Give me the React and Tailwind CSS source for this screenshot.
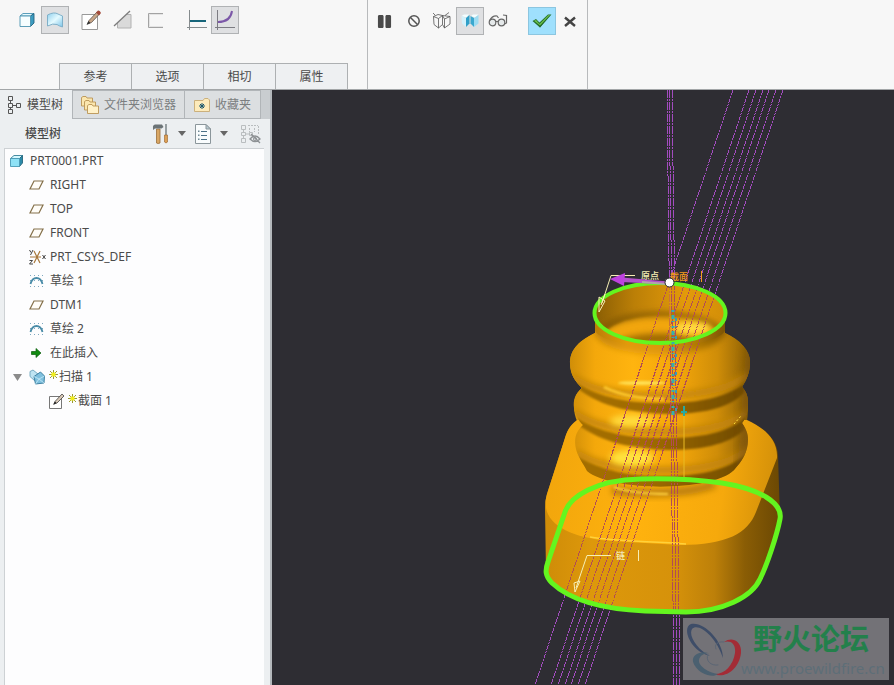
import React, { useState } from 'react';
import { FaPause } from 'react-icons/fa';

const FONT = 'font-["Noto_Sans","Noto_Sans_CJK_SC",sans-serif]';

const ribbonTabs = ['参考', '选项', '相切', '属性'];

const treeItems = [
  { icon: 'part', label: 'PRT0001.PRT', depth: 0 },
  { icon: 'plane', label: 'RIGHT', depth: 1 },
  { icon: 'plane', label: 'TOP', depth: 1 },
  { icon: 'plane', label: 'FRONT', depth: 1 },
  { icon: 'csys', label: 'PRT_CSYS_DEF', depth: 1 },
  { icon: 'sketch', label: '草绘 1', depth: 1 },
  { icon: 'plane', label: 'DTM1', depth: 1 },
  { icon: 'sketch', label: '草绘 2', depth: 1 },
  { icon: 'insert', label: '在此插入', depth: 1 },
  { icon: 'sweep', label: '扫描 1', depth: 1, isNew: true, open: true },
  { icon: 'section', label: '截面 1', depth: 2, isNew: true },
];

// top / bottom x of the slanted and the near vertical centre lines
const slantedLines = [[733, 535], [749, 551], [756, 558], [763, 565], [769, 571], [776, 578], [783, 585]];
const uprightLines = [[667, 674], [669, 677], [672, 680]];

const BODY = 'M595 313 L595 333 C576 342 570 352 570 363 C570 376 577 383 582 388 C575 394 574 400 574 407 C574 412 575 416 577 421 C569 426 567 432 565 438 L547 494 Q545 500 545 508 L546 572 C546 577 549 580 552 583 C570 600 600 609 645 611 L686 612 C722 612 752 597 760 579 C767 565 777 535 780 519 L778 455 C777 439 764 428 747 421 C748 415 748 409 748 402 C748 396 746 391 742 387 C747 379 750 372 750 362 C750 350 740 340 725 333 L725 313 C725 275 595 275 595 313 Z';
const BELLOWS = 'M595 313 V333 C576 342 570 352 570 363 C570 376 577 383 582 388 C575 394 573 400 574 408 C575 415 579 421 583 425 C575 432 574 440 576 449 C578 457 583 463 587 471 C612 492 712 492 734 470 C742 461 748 452 748 440 C748 433 746 429 742 423 C747 417 748 410 748 402 C748 396 746 391 742 387 C747 379 750 372 750 362 C750 350 740 340 725 333 V313 Z';
const LOOP = 'M640 479 C675 478 700 480 722 483 C760 489 783 503 780 519 C777 535 767 565 760 579 C752 597 722 612 686 612 L645 611 C600 609 570 600 552 583 C545 576 545 570 548 562 L565 512 C570 497 595 480 640 479 Z';

function CubeIcon() {
  return (
    <svg width="18" height="18" viewBox="0 0 18 18">
      <path d="M2 5 L5 2.500 H16 L12.500 5 Z" fill="#e8fbff" stroke="#4a93b3" strokeWidth="0.900" />
      <path d="M12.500 5 L16 2.500 V12 L12.500 15.500 Z" fill="#3c9cc0" stroke="#22627f" strokeWidth="0.900" />
      <path d="M2 5 H12.500 V15.500 H2 Z" fill="#f6feff" stroke="#4b93b0" strokeWidth="0.900" />
    </svg>
  );
}

function SurfaceIcon() {
  return (
    <svg width="18" height="18" viewBox="0 0 18 18">
      <defs>
        <linearGradient id="surf" x1="0" x2="1" y1="0" y2="1">
          <stop offset="0" stopColor="#8fd0ee" />
          <stop offset="0.500" stopColor="#e4faff" />
          <stop offset="1" stopColor="#7dc4e8" />
        </linearGradient>
      </defs>
      <path d="M1.500 4 Q8 0.500 12 3 Q14 4 16.500 5 V16 Q13 15 11 13.500 Q7 12 1.500 15 Z" fill="url(#surf)" stroke="#7fb0c9" />
    </svg>
  );
}

function PencilIcon({ size = 22 }) {
  return (
    <svg width={size} height={size} viewBox="0 0 22 22">
      <path d="M2 5.500 H17.500 V20.500 H2 Z" fill="#fff" stroke="#999" />
      <path d="M7.500 15 L9 11.500 L17 3 L19.500 5 L11.500 13.500 Z" fill="#c8a688" stroke="#5d544e" strokeWidth="0.800" />
      <path d="M16 3.500 L18 1.500 Q20 1 21 4 L19 6.500 Z" fill="#a34a3a" />
      <path d="M6.500 16 L8.500 12 L10.500 14 Z" fill="#333" />
    </svg>
  );
}

function RemoveMaterialIcon() {
  return (
    <svg width="20" height="20" viewBox="0 0 20 20">
      <path d="M4.500 4.500 H18 V18 H4.500 Z" fill="#dadada" stroke="#b2b2b2" />
      <path d="M3 3 H15 L3 14 Z" fill="#f7f7f7" />
      <path d="M17 4.500 H18 M4.500 16 V18" stroke="#b2b2b2" />
      <path d="M1 16 L17 1" stroke="#7c7c7c" strokeWidth="1.300" />
    </svg>
  );
}

function ThinIcon() {
  return (
    <svg width="18" height="18" viewBox="0 0 18 18" fill="none">
      <path d="M17 2.500 H2.500 V16.500 H17" stroke="#a3a3a3" />
      <path d="M17 3.500 H3.500 V15.500 H17" stroke="#e4e4e4" />
    </svg>
  );
}

function ConstantSectionIcon() {
  return (
    <svg width="22" height="22" viewBox="0 0 22 22">
      <path d="M3.500 1 V21 M1 18.500 H21" stroke="#858b8d" />
      <path d="M4 12 H20" stroke="#17657a" strokeWidth="2" />
    </svg>
  );
}

function VariableSectionIcon() {
  return (
    <svg width="22" height="22" viewBox="0 0 22 22" fill="none">
      <path d="M3.500 1 V21 M1 18.500 H21" stroke="#7c7c82" />
      <path d="M4 13 C13 13 17 9 18 2" stroke="#7c58a8" strokeWidth="2" />
    </svg>
  );
}

function NoPreviewIcon() {
  return (
    <svg width="14" height="14" viewBox="0 0 14 14" fill="none" stroke="#555" strokeWidth="1.500">
      <circle cx="7" cy="7" r="5.200" />
      <path d="M3.500 3.500 L10.500 10.500" />
    </svg>
  );
}

function WireIcon() {
  return (
    <svg width="20" height="18" viewBox="0 0 20 18" fill="none" stroke="#555" strokeWidth="0.800">
      <path d="M1.500 4.500 L6.500 6.500 V16 L2 12.500 Z M6.500 6.500 L10.500 3.500 V12.500 L6.500 16 M1.500 4.500 L6 2.500 L10.500 3.500" />
      <path d="M12.500 7 L18 4.500 V12 L12.500 16 Z M10.500 3.500 L12.500 7 M10.500 3.500 L18 4.500 M10.500 12.500 L12.500 16" />
      <path d="M13 3.500 L17 0.500 M1 1 L3 3" />
    </svg>
  );
}

function AttachedIcon() {
  return (
    <svg width="20" height="16" viewBox="0 0 20 16">
      <path d="M1.500 3 L4 1.500 H9 L6.500 4.500 Z M11 3 L13 1.500 H18.500 L15 4.500 Z" fill="#f4feff" />
      <path d="M1.500 3 L6 5 V14 L2 10.500 Z" fill="#d3f1fb" />
      <path d="M6 5 L9.500 2 V10.500 L6 14 Z" fill="#2f9fc8" />
      <path d="M10.500 3 L14 5 V14 L10.500 10.500 Z" fill="#3aa8cf" />
      <path d="M14 5 L18.500 2 V10.500 L14 14 Z" fill="#9edcf2" />
    </svg>
  );
}

function GlassesIcon() {
  return (
    <svg width="20" height="14" viewBox="0 0 20 14" fill="none" stroke="#666" strokeWidth="1.200">
      <circle cx="4.500" cy="8.500" r="3.300" fill="#e5e9ea" />
      <circle cx="13.500" cy="8.500" r="3.300" fill="#e5e9ea" />
      <path d="M8 8 Q9 6.500 10 8 M1.500 7 Q4 1.500 9 2 L10.500 4 M16.500 10 L18.500 9 V1.500 L15 1" />
    </svg>
  );
}

function CheckIcon() {
  return (
    <svg width="22" height="18" viewBox="0 0 22 18">
      <path d="M1.500 9 L5 7 L8.500 10.500 L17 2.500 L20.500 2.500 L9 15.500 Z" fill="#256e2c" />
      <path d="M3 8.700 L5 8 L8.500 12 L17.500 3 L19 3 L9 13.500 Z" fill="#6cc24c" />
      <path d="M4 10 L8.700 14.200 L19 3.500 L9 15.500 Z" fill="#256e2c" />
    </svg>
  );
}

function CloseIcon() {
  return (
    <svg width="14" height="12" viewBox="0 0 14 12" stroke="#444" strokeWidth="2.400">
      <path d="M2 2.500 L12 11 M12 2.500 L2 11" />
    </svg>
  );
}

function ModelTreeIcon() {
  return (
    <svg width="16" height="20" viewBox="0 0 16 20" fill="none" stroke="#555">
      <path d="M1.500 1.500 h4 v4 h-4 Z M1.500 8.500 h4 v4 h-4 Z M1.500 14.500 h4 v4 h-4 Z M9.500 8.500 h4 v4 h-4 Z M3.500 6 v2 M3.500 13 v1 M6 10.500 h3" />
    </svg>
  );
}

function FoldersIcon() {
  return (
    <svg width="20" height="20" viewBox="0 0 20 20" fill="#fbe6ae" stroke="#b99455" strokeWidth="0.900">
      <path d="M1.500 11 V2.500 L3 1.500 H6 L7 3 H12.500 V11 Z" />
      <path d="M4.500 15 V6.500 L6 5.500 H9 L10 7 H15.500 V15 Z" />
      <path d="M7.500 18.500 V10.500 L9 9.500 H12 L13 11 H18.500 V18.500 Z" fill="#fff1c8" />
    </svg>
  );
}

function FavoritesIcon() {
  return (
    <svg width="18" height="16" viewBox="0 0 18 16">
      <path d="M1.500 14.500 V3.500 H10 L11.500 1.500 H15 L16.500 3 V14.500 Z" fill="#fdebbb" stroke="#cbb07c" />
      <path d="M9 6 V12 M6 9 H12 M7 7 L11 11 M11 7 L7 11" stroke="#17556c" />
    </svg>
  );
}

function ToolsIcon() {
  return (
    <svg width="18" height="22" viewBox="0 0 18 22">
      <path d="M4.500 6 H8 V20 Q6 21 4.500 20 Z" fill="#d9a765" stroke="#9a6d38" strokeWidth="0.800" />
      <path d="M1 5 Q0.500 2 3 1.500 H10 L11.500 4 L9.500 5.500 H3 L1 7 Z" fill="#6b7376" />
      <path d="M14 1 V12" stroke="#7b8487" strokeWidth="1.500" />
      <path d="M12.500 12 H15.500 V19 Q14 21 12.500 19 Z" fill="#dca055" stroke="#97602a" strokeWidth="0.600" />
    </svg>
  );
}

function ListIcon() {
  return (
    <svg width="18" height="22" viewBox="0 0 18 22">
      <path d="M1.500 1.500 H12 L16.500 6 V20.500 H1.500 Z" fill="#f9fcfd" stroke="#8b969b" />
      <path d="M12 1.500 V6 H16.500 Z" fill="#b9cbd2" stroke="#8b969b" />
      <path d="M7 8.500 H13 M7 12.500 H13 M7 16.500 H13" stroke="#4b7187" />
      <path d="M4 7.500 h1.500 v1.500 h-1.500 Z M4 11.500 h1.500 v1.500 h-1.500 Z M4 15.500 h1.500 v1.500 h-1.500 Z" fill="#6e8794" />
    </svg>
  );
}

function HiddenTreeIcon() {
  return (
    <svg width="22" height="22" viewBox="0 0 22 22" fill="none" stroke="#b9bdbf">
      <path d="M1.500 2.500 h4 v4 h-4 Z M1.500 9.500 h4 v3 h-4 Z M1.500 15.500 h4 v4 h-4 Z M3.500 7 v2 M3.500 13 v2 M6 11 h3 M9.500 9.500 h3 v3 h-3 Z" />
      <path d="M8 2.500 h10 M18.500 3 v9 M9.500 5 v4 M14.500 5 v4" strokeDasharray="2 1" />
      <path d="M10 16 Q15 10 20 16 Q15 21 10 16 Z M11 11 L20 20" stroke="#8d9194" strokeWidth="1.300" />
      <circle cx="15" cy="16" r="1.500" stroke="#8d9194" />
    </svg>
  );
}

function TreeIcon({ name }) {
  if (name === 'part') {
    return (
      <svg width="16" height="16" viewBox="0 0 16 16">
        <path d="M1.500 5.500 L5 2.500 H13.500 L10.500 5.500 Z" fill="#d5f8ff" stroke="#357f97" strokeWidth="0.900" />
        <path d="M10.500 5.500 L13.500 2.500 V10 L10.500 13.500 Z" fill="#2b8aa9" stroke="#27677d" strokeWidth="0.900" />
        <path d="M1.500 5.500 H10.500 V13.500 H1.500 Z" fill="#8fe2f6" stroke="#4a9ab5" strokeWidth="0.900" />
      </svg>
    );
  }
  if (name === 'plane') {
    return (
      <svg width="16" height="16" viewBox="0 0 16 16">
        <path d="M5 4 H14 L10 12 H1 Z" fill="#fffdf8" stroke="#84704a" strokeWidth="1.200" />
      </svg>
    );
  }
  if (name === 'csys') {
    return (
      <svg width="18" height="16" viewBox="0 0 18 16" fill="none">
        <path d="M5 2 L11 14 M11 2 L5 14 M1 8 H12" stroke="#a9793c" strokeWidth="1.200" />
        <path d="M0.500 1 L2 3.500 M4 1 L1.500 6 M13.500 6 L16.500 10 M16.500 6 L13.500 10 M0.500 11.500 H3.500 L0.500 15 H4" stroke="#444" />
      </svg>
    );
  }
  if (name === 'sketch') {
    return (
      <svg width="16" height="16" viewBox="0 0 16 16" fill="none">
        <path d="M1 2.500 H15 M1 7.500 H15 M1 13.500 H15" stroke="#80a9c0" strokeDasharray="1 3" />
        <path d="M1.500 11 Q3 5 7.500 5 Q12 5 13.500 11" stroke="#4a8ca8" strokeWidth="1.800" />
      </svg>
    );
  }
  if (name === 'insert') {
    return (
      <svg width="16" height="16" viewBox="0 0 16 16">
        <path d="M2.500 6.500 H7 V3.500 L12 8 L7 12.500 V9.500 H2.500 Z" fill="#128b12" stroke="#0a5c0b" strokeWidth="0.700" />
      </svg>
    );
  }
  if (name === 'sweep') {
    return (
      <svg width="18" height="18" viewBox="0 0 18 18">
        <path d="M1 3.500 L4 2 L9 6 L6 9 L6 13 L1 8.500 Z" fill="#bfe4f2" stroke="#6ea5bd" strokeWidth="0.900" />
        <path d="M5 8.500 L11.500 4 L15.500 8 L15 15 L6.500 16 Z" fill="#7fc0de" stroke="#3f82a3" />
        <path d="M5 8.500 L10 11 L15.500 8 M10 11 L6.500 16 M10 11 L15 15" fill="none" stroke="#c7ebf8" strokeWidth="0.800" />
      </svg>
    );
  }
  return (
    <svg width="18" height="18" viewBox="0 0 18 18">
      <path d="M1.500 4.500 H13.500 V16.500 H1.500 Z" fill="#fff" stroke="#777" />
      <path d="M6 12 L7 9.500 L14 2 L16 4 L9 11 Z" fill="#d8c8b6" stroke="#444" strokeWidth="0.800" />
      <path d="M5 13 L7 9.500 L8.500 11 Z" fill="#222" />
    </svg>
  );
}

function NewMark() {
  return (
    <svg width="9" height="9" viewBox="0 0 9 9" className="mb-1.5 shrink-0">
      <path d="M4.500 0 V9 M0 4.500 H9 M1 1 L8 8 M8 1 L1 8" stroke="#8e8d1d" strokeWidth="0.900" />
      <path d="M2.500 2.500 h4 v4 h-4 Z" fill="#f2ef1c" />
    </svg>
  );
}

function ToolButton({ label, pressed, className = '', children }) {
  return (
    <button
      aria-label={label}
      className={`flex h-7 w-7 shrink-0 items-center justify-center border ${pressed ? 'border-[#b0b2b4] bg-[#dfe0e2]' : 'border-transparent'} ${className}`}
    >
      {children}
    </button>
  );
}

function Ribbon() {
  return (
    <header className="flex h-[90px] border-b border-[#a3a6a8] bg-[#f7f7f7]">
      <div className="flex w-[367px] shrink-0 flex-col justify-between">
        <div className="flex pt-1.5 pl-[13px]">
          <ToolButton label="实体"><CubeIcon /></ToolButton>
          <ToolButton label="曲面" pressed><SurfaceIcon /></ToolButton>
          <ToolButton label="草绘" className="ml-2"><PencilIcon /></ToolButton>
          <ToolButton label="移除材料" className="ml-1"><RemoveMaterialIcon /></ToolButton>
          <ToolButton label="薄板" className="ml-1"><ThinIcon /></ToolButton>
          <ToolButton label="恒定截面" className="ml-3.5"><ConstantSectionIcon /></ToolButton>
          <ToolButton label="可变截面" pressed><VariableSectionIcon /></ToolButton>
        </div>
        <nav className="ml-[59px] flex border-l border-[#adb0b2]">
          {ribbonTabs.map((tab) => (
            <button key={tab} className="h-[26px] w-[72px] border-t border-r border-[#adb0b2] bg-[#eef0f2] text-xs text-[#4a4a4a]">
              {tab}
            </button>
          ))}
        </nav>
      </div>
      <div className="flex w-[221px] shrink-0 items-start border-x border-[#b8babc] pt-[7px] pl-0.5">
        <ToolButton label="暂停"><FaPause size={15} color="#4a4a4a" /></ToolButton>
        <ToolButton label="无预览" className="ml-0.5"><NoPreviewIcon /></ToolButton>
        <ToolButton label="分离"><WireIcon /></ToolButton>
        <ToolButton label="连接" pressed><AttachedIcon /></ToolButton>
        <ToolButton label="预览"><GlassesIcon /></ToolButton>
        <button aria-label="确定" className="ml-4 flex h-7 w-7 items-center justify-center border border-[#8cc6e0] bg-[#9fe0fd]">
          <CheckIcon />
        </button>
        <ToolButton label="取消"><CloseIcon /></ToolButton>
      </div>
    </header>
  );
}

function Caret() {
  return (
    <svg width="8" height="5" viewBox="0 0 8 5"><path d="M0 0 H8 L4 5 Z" fill="#666" /></svg>
  );
}

function Sidebar() {
  const [selected, setSelected] = useState(null);

  return (
    <aside className="flex w-[272px] shrink-0 flex-col border-r-2 border-[#b4b8bc] bg-[#eceff1] text-xs text-[#4a4a4a]">
      <div className="flex h-[29px] bg-[#c9cdd0]">
        <button className="flex w-[72px] items-center gap-1 bg-[#eceff1] pl-[7px] whitespace-nowrap">
          <ModelTreeIcon />模型树
        </button>
        <button className="flex w-[113px] items-center gap-1 border border-[#b1b5b8] bg-[#dcdfe1] pl-[7px] whitespace-nowrap text-[#7b7e80]">
          <FoldersIcon />文件夹浏览器
        </button>
        <button className="flex w-[76px] items-center gap-1 border-y border-r border-[#b1b5b8] bg-[#dcdfe1] pl-2 whitespace-nowrap text-[#7b7e80]">
          <FavoritesIcon />收藏夹
        </button>
      </div>
      <div className="flex h-[29px] items-center pr-2 pl-[25px]">
        <h2 className="flex-1 font-medium">模型树</h2>
        <button aria-label="设置" className="flex items-center gap-2"><ToolsIcon /><Caret /></button>
        <button aria-label="显示" className="ml-2 flex items-center gap-2"><ListIcon /><Caret /></button>
        <button aria-label="隐藏树" className="ml-3"><HiddenTreeIcon /></button>
      </div>
      <ul className="mr-1.5 ml-1 flex-1 border-t border-l border-[#cdd1d4] bg-[#fdfdfe]">
        {treeItems.map((item, idx) => (
          <li key={idx}>
            <button
              onClick={() => setSelected(idx)}
              className={`flex h-6 w-full items-center text-left ${item.depth === 0 ? 'pl-1' : item.depth === 1 ? 'pl-1.5' : 'pl-[43px]'} ${selected === idx ? 'bg-[#d7ecf6]' : ''}`}
            >
              {item.depth === 1 && (
                <span className="flex w-[18px] shrink-0 items-center pl-0.5">
                  {item.open && <svg width="9" height="7" viewBox="0 0 9 7"><path d="M0 0 H9 L4.500 7 Z" fill="#8b8b8b" /></svg>}
                </span>
              )}
              <span className="flex w-5 shrink-0 items-center"><TreeIcon name={item.icon} /></span>
              {item.isNew && <NewMark />}
              <span className="ml-px">{item.label}</span>
            </button>
          </li>
        ))}
      </ul>
    </aside>
  );
}

function CentreLines({ color }) {
  return (
    <g stroke={color} strokeWidth="1" shapeRendering="crispEdges">
      {slantedLines.map(([a, b]) => (
        <line key={a} x1={a} y1="90" x2={b} y2="685" strokeDasharray="5 1 2 1" />
      ))}
      {uprightLines.map(([a, b]) => (
        <line key={a} x1={a} y1="90" x2={b} y2="685" strokeDasharray="8 1 2 1" />
      ))}
    </g>
  );
}

function Model() {
  return (
    <svg className="h-full w-full" viewBox="272 90 622 595" preserveAspectRatio="xMidYMid slice">
      <defs>
        <linearGradient id="front" gradientUnits="userSpaceOnUse" x1="545" x2="780" y1="0" y2="0">
          <stop offset="0" stopColor="#cf8c08" />
          <stop offset="0.200" stopColor="#dd980b" />
          <stop offset="0.550" stopColor="#d6920a" />
          <stop offset="0.720" stopColor="#bd8009" />
          <stop offset="0.850" stopColor="#8a5d05" />
          <stop offset="1" stopColor="#6b4803" />
        </linearGradient>
        <linearGradient id="face" gradientUnits="userSpaceOnUse" x1="550" x2="780" y1="470" y2="500">
          <stop offset="0" stopColor="#f2a60c" />
          <stop offset="0.400" stopColor="#ffb20e" />
          <stop offset="0.750" stopColor="#f6a90c" />
          <stop offset="1" stopColor="#cf8d09" />
        </linearGradient>
        <linearGradient id="ring" gradientUnits="userSpaceOnUse" x1="570" x2="750" y1="0" y2="0">
          <stop offset="0" stopColor="#d08e08" />
          <stop offset="0.140" stopColor="#f4a80b" />
          <stop offset="0.350" stopColor="#ffb40f" />
          <stop offset="0.600" stopColor="#f3a60a" />
          <stop offset="0.820" stopColor="#cf8d08" />
          <stop offset="1" stopColor="#8b5f05" />
        </linearGradient>
        <linearGradient id="crease" gradientUnits="userSpaceOnUse" x1="575" x2="748" y1="0" y2="0">
          <stop offset="0" stopColor="#a36e06" />
          <stop offset="0.400" stopColor="#a16c06" />
          <stop offset="0.700" stopColor="#875a04" />
          <stop offset="1" stopColor="#6f4a03" />
        </linearGradient>
        <linearGradient id="neck" gradientUnits="userSpaceOnUse" x1="595" x2="725" y1="0" y2="0">
          <stop offset="0" stopColor="#bb7f07" />
          <stop offset="0.250" stopColor="#e39a09" />
          <stop offset="0.500" stopColor="#df9709" />
          <stop offset="0.800" stopColor="#ad7606" />
          <stop offset="1" stopColor="#7c5404" />
        </linearGradient>
        <linearGradient id="bore" gradientUnits="userSpaceOnUse" x1="595" x2="725" y1="0" y2="0">
          <stop offset="0" stopColor="#8a5e04" />
          <stop offset="0.300" stopColor="#bb7f07" />
          <stop offset="0.700" stopColor="#e39a0a" />
          <stop offset="1" stopColor="#d38f08" />
        </linearGradient>
        <filter id="edge" x="-10%" y="-30%" width="120%" height="160%"><feGaussianBlur stdDeviation="1" /></filter>
        <filter id="soft" x="-30%" y="-100%" width="160%" height="300%"><feGaussianBlur stdDeviation="3" /></filter>
        <filter id="softer" x="-30%" y="-100%" width="160%" height="300%"><feGaussianBlur stdDeviation="5" /></filter>
        <clipPath id="bodyClip"><path d={BODY} /></clipPath>
        <clipPath id="boreClip"><ellipse cx="660" cy="313" rx="65" ry="30" /></clipPath>
        <clipPath id="bellowsClip"><path d={BELLOWS} /></clipPath>
      </defs>

      <CentreLines color="#a34cc0" />

      {/* base */}
      <path d={BODY} fill="url(#front)" />
      <path d="M577 420 C569 426 567 432 565 438 L547 494 C539 521 565 537 610 541 L680 545 C727 545 748 533 756 512 L777 458 C778 439 764 428 747 420 Z" fill="url(#face)" />
      <path d="M590 537 C620 542 650 541 686 544" fill="none" stroke="#ffd13a" strokeWidth="1.500" />
      <g clipPath="url(#bodyClip)">
        <path d="M612 490 C640 495 690 494 715 484" fill="none" stroke="#b87c07" strokeWidth="8" filter="url(#soft)" />
        <path d="M614 487 C630 493 650 494 668 494" fill="none" stroke="#ffd13c" strokeWidth="2" filter="url(#edge)" />
      </g>

      {/* bellows */}
      <path d={BELLOWS} fill="url(#ring)" />
      <g clipPath="url(#bellowsClip)">
        {/* undersides */}
        <g fill="none" stroke="#c28407" strokeWidth="7" filter="url(#soft)">
          <path d="M572 376 C600 402 716 404 748 374" />
          <path d="M574 412 C604 438 716 440 747 412" />
          <path d="M576 452 C606 476 716 478 746 450" />
        </g>
        {/* creases */}
        <g fill="url(#crease)" filter="url(#edge)">
          <path d="M577 383 C600 398 630 403 664 403 C700 403 728 397 747 382 L744 393 C728 409 700 414 668 414 C634 413 602 408 577 388 Z" />
          <path d="M577 418 C600 433 630 438 664 438 C700 438 728 433 747 417 L744 430 C728 445 700 450 668 450 C634 449 602 443 577 424 Z" />
          <path d="M577 456 C602 471 630 476 664 476 C700 476 728 470 747 454 V490 H590 C586 480 580 468 577 456 Z" />
        </g>
        {/* right hand shade */}
        <path d="M752 345 C744 400 748 450 738 480" fill="none" stroke="#76500a" strokeWidth="10" filter="url(#softer)" opacity="0.700" />
        {/* highlights */}
        <ellipse cx="642" cy="383" rx="24" ry="2" fill="#ffe052" filter="url(#edge)" />
        <path d="M604 387 C620 395 640 399 664 399" fill="none" stroke="#ffc92c" strokeWidth="3" filter="url(#edge)" />
        <ellipse cx="632" cy="421" rx="22" ry="6" fill="#ffdc3c" filter="url(#soft)" />
        <ellipse cx="632" cy="458" rx="22" ry="8" fill="#ffe23e" filter="url(#soft)" />
        {/* neck running into the shoulder */}
        <path d="M594 300 V333 C606 362 714 362 726 332 V300 Z" fill="url(#neck)" filter="url(#soft)" />
      </g>
      <path d="M595 313 V331 C610 352 710 352 725 331 V313 Z" fill="url(#neck)" />
      <g clipPath="url(#boreClip)">
        <path d="M594 282 H726 V344 H594 Z" fill="url(#bore)" />
        <path d="M600 340 C610 309 706 308 722 336 L710 348 H610 Z" fill="#f2a60b" filter="url(#edge)" />
        <path d="M602 330 C620 309 700 309 720 330" fill="none" stroke="#7c5304" strokeWidth="4" filter="url(#soft)" />
        <path d="M612 344 C630 330 690 330 704 344 Z" fill="#9c6906" filter="url(#soft)" />
        <ellipse cx="692" cy="328" rx="19" ry="6" fill="#ffdb40" filter="url(#soft)" />
      </g>

      <g clipPath="url(#bodyClip)"><CentreLines color="#b24b55" /></g>

      <path d="M684 412 V478" stroke="#e9bb25" />
      <path d="M734 424 L741 416" stroke="#ffe13c" strokeDasharray="2 2" />
      <ellipse cx="660" cy="313" rx="65.500" ry="30" fill="none" stroke="#64f51f" strokeWidth="4" />
      <path d={LOOP} fill="none" stroke="#64f51f" strokeWidth="5" strokeLinejoin="round" />
      <path d="M673 310 V415" stroke="#36aeb0" strokeWidth="3" strokeDasharray="2 3 4 2 1 4" />
      <path d="M676 318 V412" stroke="#3c9ab4" strokeWidth="2" strokeDasharray="3 5 1 9" />
      <path d="M684 406 V416 M681 412 H687" stroke="#27a9a0" strokeWidth="2" />
      <path d="M670 285 V340" stroke="#e79c1a" />

      {/* section labels and handles */}
      <g fill="none" stroke="#f6efb4">
        <path d="M635 275.500 H611 L602 303 M599 297 L605 301 L599 312 Z M601 305 L605 294" />
        <path d="M611 555.500 H587 L576 588 M575 592 L574 583 L580 581 Z M638.500 550 V561" />
      </g>
      <path d="M701.500 271 V282" stroke="#f39a1c" />
      <g fontSize="9" fontWeight="500" className={FONT}>
        <text x="641" y="279" fill="#f6efb4">原点</text>
        <text x="670" y="280" fill="#f39a1c">截面</text>
        <text x="616" y="559" fill="#f6efb4">链</text>
      </g>
      <path d="M668 284.500 L622 282 V277.500 L668 281.500 Z" fill="#b352cb" />
      <path d="M610 279 L625 273 L624 286 Z" fill="#bd42df" />
      <path d="M667 284 L642 282" stroke="#b4a3ab" strokeWidth="2" />
      <circle cx="669.500" cy="282.500" r="4.500" fill="#fff" stroke="#222" />
    </svg>
  );
}

function Watermark() {
  return (
    <div className="absolute right-[5px] bottom-[5px] flex h-[62px] w-[206px] bg-[#77767b]/95">
      <svg width="58" height="62" viewBox="0 0 58 62" className="shrink-0" fill="none" strokeLinecap="round">
        <path d="M40 40 C40 22 20 3 8 6 C-2 10 8 34 27 38 C15 32 5 18 9 11 C15 4 33 18 40 40 Z" fill="#3e4d68" />
        <path d="M41 24 C49 18 59 23 58 35 C56 51 43 61 30 56 C41 57 50 48 52 35 C53 26 48 22 41 24 Z" fill="#a32c36" />
        <path d="M25 35 C14 33 6 39 12 48 C18 57 30 60 35 56 C26 55 15 48 16 42 C17 37 21 36 25 35 Z" fill="#4b6070" />
        <path d="M25 36 C22 43 28 48 35 47 M41 24 C34 23 31 27 33 31" stroke="#5b6675" />
      </svg>
      <div className="flex flex-col">
        <span className="pl-3 text-[29px] leading-[42px] font-bold text-[#23804b]">野火论坛</span>
        <a href="#" className="text-[15px] leading-4 text-[#5d6e77]">www.proewildfire.cn</a>
      </div>
    </div>
  );
}

export default function App() {
  return (
    <div className={`flex min-h-screen flex-col bg-[#2e2d33] ${FONT}`}>
      <Ribbon />
      <div className="flex flex-1">
        <Sidebar />
        <main className="relative min-w-0 flex-1 bg-[#2e2d33]">
          <div className="absolute inset-0"><Model /></div>
          <Watermark />
        </main>
      </div>
    </div>
  );
}
